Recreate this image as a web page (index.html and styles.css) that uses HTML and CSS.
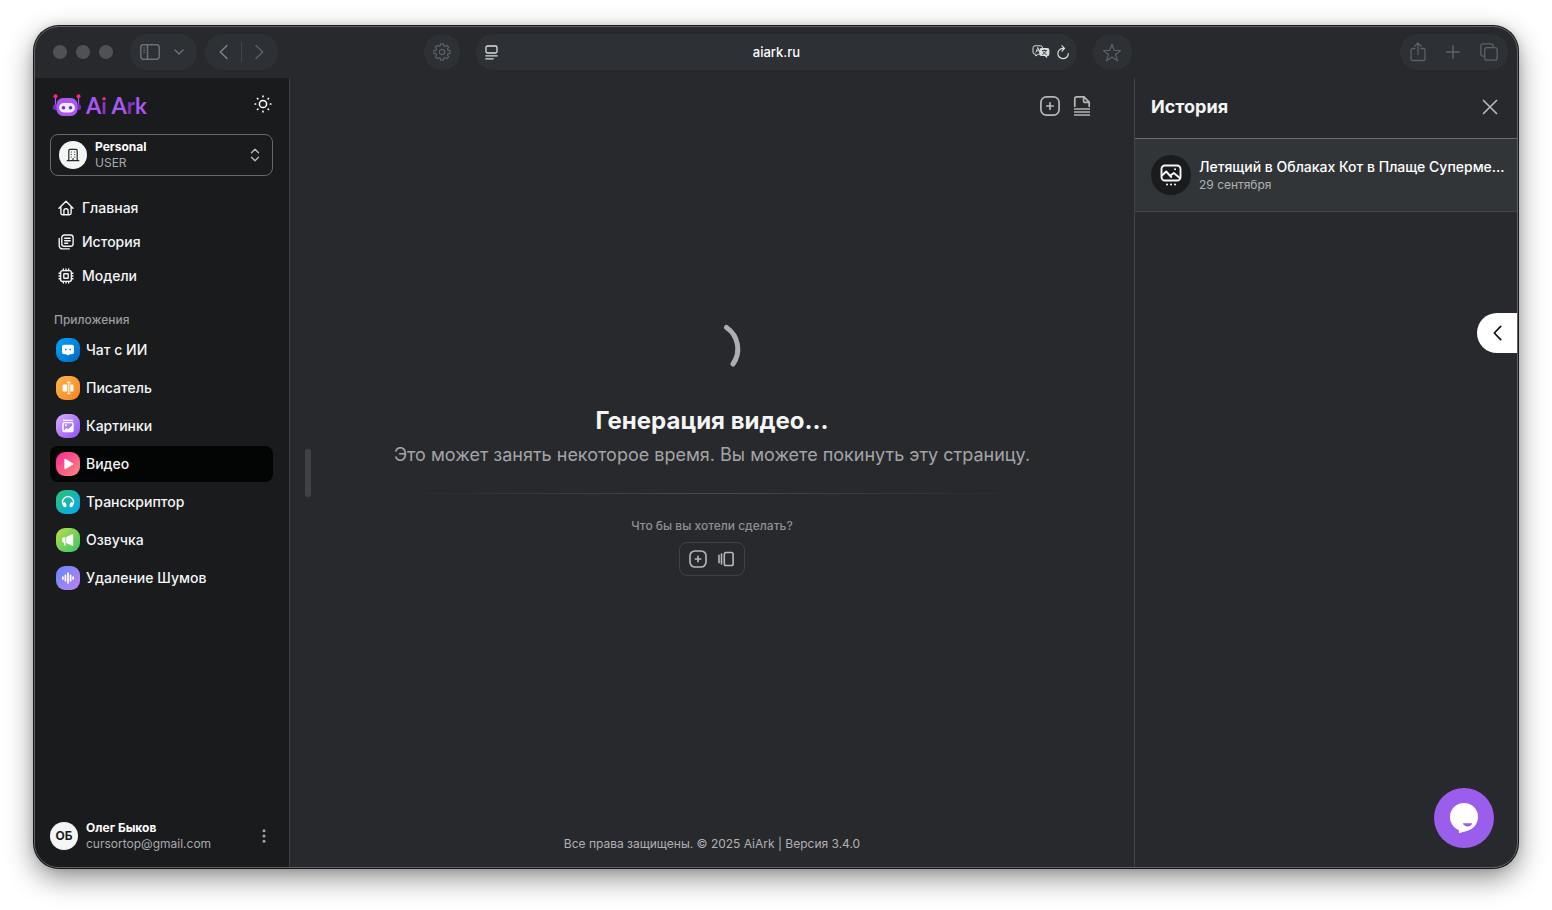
FILE: index.html
```html
<!DOCTYPE html>
<html lang="ru">
<head>
<meta charset="utf-8">
<meta name="viewport" content="width=device-width, initial-scale=1">
<title>Ai Ark</title>
<link rel="stylesheet" href="styles.css">
</head>
<body>
<div class="window">
  <header class="toolbar">
    <div class="toolbar-left">
      <div class="lights"><span class="light"></span><span class="light"></span><span class="light"></span></div>
      <div class="pill pill-side">
        <button class="tool tool-mid" aria-label="Боковая панель"><svg width="20" height="16" viewBox="0 0 20 16" fill="none" stroke="currentColor" stroke-width="1.5"><rect x=".8" y=".8" width="18.4" height="14.4" rx="2.6"/><path d="M7.500 1v14"/><path d="M3.200 4h2M3.200 6.300h2M3.200 8.600h2" stroke-width="1"/></svg></button>
        <button class="tool tool-mid" aria-label="Группы вкладок"><svg width="10" height="6" viewBox="0 0 10 6" fill="none" stroke="currentColor" stroke-width="1.5" stroke-linecap="round" stroke-linejoin="round"><path d="M1 1l4 4 4-4"/></svg></button>
      </div>
      <div class="pill pill-nav">
        <button class="tool tool-lit" aria-label="Назад"><svg width="9" height="16" viewBox="0 0 9 16" fill="none" stroke="currentColor" stroke-width="1.5" stroke-linecap="round" stroke-linejoin="round"><path d="M8 1.5L1.3 8 8 14.5"/></svg></button>
        <span class="pill-line"></span>
        <button class="tool" aria-label="Вперёд"><svg width="9" height="16" viewBox="0 0 9 16" fill="none" stroke="currentColor" stroke-width="1.5" stroke-linecap="round" stroke-linejoin="round"><path d="M1 1.5L7.700 8 1 14.5"/></svg></button>
      </div>
    </div>
    <div class="toolbar-center">
      <button class="round tool" aria-label="Настройки"><svg width="18" height="18" viewBox="0 0 18 18" fill="none" stroke="currentColor" stroke-width="1.2" stroke-linejoin="round"><circle cx="9" cy="9" r="2.700"/><path d="M7.300 2.900 7.600 .9h2.800l.3 2 1.400.6 1.700-1.200 1.900 1.900-1.200 1.700.6 1.400 2 .3v2.800l-2 .3-.6 1.400 1.200 1.700-1.900 1.900-1.700-1.200-1.400.6-.3 2H7.600l-.3-2-1.400-.6-1.700 1.200-1.900-1.900 1.200-1.700-.6-1.400-2-.3V7.600l2-.3.6-1.400-1.200-1.700 1.900-1.900 1.700 1.200z"/></svg></button>
      <div class="address">
        <button class="site" aria-label="Меню страницы"><svg width="13" height="15" viewBox="0 0 13 15" fill="none" stroke="currentColor" stroke-width="1.3" stroke-linecap="round"><rect x="1" y="1" width="11" height="7" rx="1.5"/><path d="M.8 10.800h11.400M.8 13.800h7.400"/></svg></button>
        <input class="url" type="text" value="aiark.ru" aria-label="Адрес">
        <div class="address-tools">
          <button class="site" aria-label="Перевести"><svg width="18" height="14" viewBox="0 0 18 14"><path d="M3 .8h5.500a2 2 0 0 1 2 2v4.400a2 2 0 0 1-2 2H6.300L3.700 11V9.200H3a2 2 0 0 1-2-2V2.800a2 2 0 0 1 2-2z" fill="none" stroke="currentColor"/><path d="M3.800 7.500 5.800 2.500l2 5M4.500 5.800h2.600" fill="none" stroke="currentColor" stroke-width=".9"/><path d="M9.500 3h5.700a2.200 2.200 0 0 1 2.200 2.200v3.700a2.200 2.200 0 0 1-2.200 2.200v2.200L12.600 11H9.500a2.200 2.200 0 0 1-2.200-2.200V5.200A2.200 2.200 0 0 1 9.500 3z" fill="currentColor"/><path d="M10 5.500h5M12.500 4.500v1M14 5.500c-.5 1.800-1.800 3.200-3.800 4M11 6.500c.8 1.500 2 2.500 3.800 3" fill="none" stroke="#2d3034" stroke-width=".9"/></svg></button>
          <button class="site" aria-label="Обновить"><svg width="12" height="15" viewBox="0 0 12 15" fill="none" stroke="currentColor" stroke-width="1.200" stroke-linecap="round" stroke-linejoin="round"><path d="M6.500 3.300A5.200 5.200 0 1 0 11.300 8.500M5 .8l2.500 2.600L5 6"/></svg></button>
        </div>
      </div>
      <button class="round round-wide tool" aria-label="Избранное"><svg width="20" height="19" viewBox="0 0 20 19" fill="none" stroke="currentColor" stroke-width="1.200" stroke-linejoin="round"><path d="M10 1.200l2.200 6.100 6.500.2-5.100 4 1.800 6.200L10 14.100l-5.400 3.600 1.800-6.200-5.100-4 6.500-.2z"/></svg></button>
    </div>
    <div class="pill pill-actions">
      <button class="tool" aria-label="Поделиться"><svg width="16" height="20" viewBox="0 0 16 20" fill="none" stroke="currentColor" stroke-width="1.300" stroke-linecap="round" stroke-linejoin="round"><path d="M5 6.500H3A2 2 0 0 0 1 8.500v8a2 2 0 0 0 2 2h10a2 2 0 0 0 2-2v-8a2 2 0 0 0-2-2h-2M8 12.500V1.200M4.900 4L8 1l3.100 3"/></svg></button>
      <button class="tool" aria-label="Новая вкладка"><svg width="14" height="14" viewBox="0 0 14 14" fill="none" stroke="currentColor" stroke-width="1.500" stroke-linecap="round"><path d="M7 .8v12.400M.8 7h12.400"/></svg></button>
      <button class="tool" aria-label="Все вкладки"><svg width="18" height="18" viewBox="0 0 18 18" fill="none" stroke="currentColor" stroke-width="1.300"><rect x="4.700" y="4.700" width="12.500" height="12.500" rx="2.200"/><path d="M4.700 13.200H3a2.200 2.200 0 0 1-2.200-2.200V3A2.200 2.200 0 0 1 3 .8h8A2.200 2.200 0 0 1 13.200 3v1.700"/></svg></button>
    </div>
  </header>

  <div class="app">
    <aside class="sidebar">
      <div class="brand-row">
        <a class="brand" href="#" aria-label="Ai Ark">
          <svg width="28" height="24" viewBox="0 0 28 24"><path d="M2.500 3v8M25.500 3v8" stroke="#a855f7" stroke-width="1.200"/><circle cx="2.500" cy="2.300" r="2" fill="#f72585"/><circle cx="25.500" cy="2.300" r="2" fill="#f72585"/><rect x="0" y="10.500" width="5" height="5.500" rx="2" fill="#7e2bc4"/><rect x="23" y="10.500" width="5" height="5.500" rx="2" fill="#7e2bc4"/><rect x="3.500" y="4" width="21" height="18" rx="6.500" fill="#a957f0"/><rect x="6" y="9" width="16" height="9.500" rx="4.700" fill="#efe9f8"/><circle cx="10.500" cy="13.800" r="1.800" fill="#7130b5"/><circle cx="17.500" cy="13.800" r="1.800" fill="#7130b5"/></svg>
          <span class="brand-name">A<span class="brand-i">i</span> A<span class="brand-deep">r</span>k</span>
        </a>
        <button class="icon-btn bright" aria-label="Сменить тему"><svg width="18" height="18" viewBox="0 0 18 18" fill="none" stroke="currentColor" stroke-width="1.500" stroke-linecap="round"><circle cx="9" cy="9" r="3.600"/><path d="M9 1.200v.4M9 16.400v.4M1.200 9h.4M16.400 9h.4M3.500 3.500l.3.3M14.200 14.200l.3.3M3.500 14.500l.3-.3M14.200 3.800l.3-.3" stroke-width="1.700"/></svg></button>
      </div>

      <button class="workspace">
        <span class="workspace-icon"><svg width="14" height="14" viewBox="0 0 14 14" fill="none" stroke="#26272b" stroke-width="1.200" stroke-linecap="round"><path d="M2.800 12.500V2.500a1.200 1.200 0 0 1 1.200-1.200h6a1.200 1.200 0 0 1 1.200 1.200v10M1.200 12.700h11.600M5.200 4h.1M8.700 4h.1M5.200 6.500h.1M8.700 6.500h.1M5.200 9h.1M8.700 9h.1M7 12v-1.500"/></svg></span>
        <span class="two-line"><strong>Personal</strong><span>USER</span></span>
        <svg width="10" height="14" viewBox="0 0 10 14" fill="none" stroke="#b9babd" stroke-width="1.400" stroke-linecap="round" stroke-linejoin="round"><path d="M1.500 4.700L5 1.200l3.500 3.500M1.500 9.300L5 12.800l3.500-3.500"/></svg>
      </button>

      <nav class="nav">
        <a class="nav-link" href="#"><svg width="16" height="16" viewBox="0 0 16 16" fill="none" stroke="currentColor" stroke-width="1.400" stroke-linecap="round" stroke-linejoin="round"><path d="M1 8.200L8 1.300l7 6.900M2.900 6.700V13A1.700 1.700 0 0 0 4.600 14.700h6.800A1.700 1.700 0 0 0 13.100 13V6.700M5.900 14.500v-3.700a2.100 2.100 0 0 1 4.200 0v3.700"/></svg>Главная</a>
        <a class="nav-link" href="#"><svg width="16" height="16" viewBox="0 0 16 16" fill="none" stroke="currentColor" stroke-width="1.400" stroke-linecap="round" stroke-linejoin="round"><rect x="3.800" y="1" width="11.300" height="11.300" rx="2.600"/><path d="M1.200 4.500v7A3.300 3.300 0 0 0 4.500 14.900h6.700M6.700 4.200h5.500M6.700 6.700h5.500M6.700 9.200h3"/></svg>История</a>
        <a class="nav-link" href="#"><svg width="16" height="16" viewBox="0 0 16 16" fill="none" stroke="currentColor" stroke-width="1.400" stroke-linecap="round" stroke-linejoin="round"><rect x="2.600" y="2.600" width="10.800" height="10.800" rx="2"/><rect x="5.800" y="5.800" width="4.400" height="4.400" rx=".5"/><path d="M5.300 1v1.500M8 1v1.500M10.700 1v1.500M5.300 13.500V15M8 13.500V15M10.700 13.500V15M1 5.300h1.500M1 8h1.500M1 10.700h1.500M13.500 5.300H15M13.500 8H15M13.500 10.700H15"/></svg>Модели</a>
      </nav>

      <h2 class="nav-title">Приложения</h2>
      <nav class="apps">
        <a class="app-link" href="#"><span class="tile tile-chat"><svg width="14" height="14" viewBox="0 0 14 14"><path d="M3 1.800h8a2 2 0 0 1 2 2v5.400a2 2 0 0 1-2 2H8.700L7 12.400l-1.700-1.200H3a2 2 0 0 1-2-2V3.800a2 2 0 0 1 2-2z" fill="#fff"/><path d="M4 6.500h1.500M8.500 6.500H10" stroke="#0d86dc" stroke-width="1.300"/></svg></span>Чат с ИИ</a>
        <a class="app-link" href="#"><span class="tile tile-write"><svg width="14" height="14" viewBox="0 0 14 14"><path d="M2.800 3.500h3.400v7H2.800A1.300 1.300 0 0 1 1.500 9.200V4.800a1.300 1.300 0 0 1 1.300-1.300zM9.300 3.500h1.900a1.300 1.300 0 0 1 1.300 1.300v4.400a1.300 1.300 0 0 1-1.300 1.300H9.300z" fill="#fff"/><path d="M6 1.300h3.500M7.800 1.300v11.400M6 12.700h3.500" stroke="#fff" stroke-width="1.100"/></svg></span>Писатель</a>
        <a class="app-link" href="#"><span class="tile tile-image"><svg width="14" height="14" viewBox="0 0 14 14"><path d="M2.500 1.300h9" stroke="#fff" stroke-width="1.200" stroke-linecap="round"/><rect x="2" y="3.600" width="10" height="9" rx="1.300" fill="none" stroke="#fff" stroke-width="1.400"/><path d="M2.500 12l3-3 1.500 1.200L12 6v6z" fill="#fff"/><circle cx="5" cy="6.300" r="1" fill="#fff"/></svg></span>Картинки</a>
        <a class="app-link active" href="#" aria-current="page"><span class="tile tile-video"><svg width="14" height="14" viewBox="0 0 14 14"><path d="M3.400 2.300v9.400a.6.6 0 0 0 .9.500l7.800-4.700a.6.6 0 0 0 0-1L4.300 1.800a.6.6 0 0 0-.9.500z" fill="#fff"/></svg></span>Видео</a>
        <a class="app-link" href="#"><span class="tile tile-script"><svg width="14" height="14" viewBox="0 0 14 14"><path d="M2.600 10A5.300 5.300 0 1 1 11.400 10" fill="none" stroke="#fff" stroke-width="1.400"/><rect x="2" y="7.300" width="3.200" height="5" rx="1.500" fill="#fff" transform="rotate(-15 3.600 9.800)"/><rect x="8.800" y="7.300" width="3.200" height="5" rx="1.500" fill="#fff" transform="rotate(15 10.400 9.800)"/></svg></span>Транскриптор</a>
        <a class="app-link" href="#"><span class="tile tile-voice"><svg width="14" height="14" viewBox="0 0 14 14"><path d="M5.200 4L11 1.300a.8.8 0 0 1 1.200.7v10a.8.8 0 0 1-1.200.7L5.200 10z" fill="#fff"/><path d="M4.200 4.200H3a1.800 1.800 0 0 0-1.800 1.800v2A1.800 1.800 0 0 0 3 9.800l.2 2.700h1.600z" fill="#fff"/></svg></span>Озвучка</a>
        <a class="app-link" href="#"><span class="tile tile-noise"><svg width="14" height="14" viewBox="0 0 14 14" stroke="#fff" stroke-width="1.700" stroke-linecap="round"><path d="M1.900 6v2M4.400 4.300v5.400M7 2v10M9.600 4.300v5.400M12.100 6v2"/></svg></span>Удаление Шумов</a>
      </nav>

      <div class="user">
        <span class="avatar">ОБ</span>
        <span class="two-line"><strong>Олег Быков</strong><span>cursortop@gmail.com</span></span>
        <button class="icon-btn user-menu" aria-label="Меню пользователя"><svg width="18" height="18" viewBox="0 0 18 18" fill="#a4a5a8"><circle cx="9" cy="3.800" r="1.500"/><circle cx="9" cy="9" r="1.500"/><circle cx="9" cy="14.200" r="1.500"/></svg></button>
      </div>
    </aside>

    <main class="main">
      <div class="resize-handle"></div>
      <div class="main-tools">
        <button class="icon-btn" aria-label="Создать"><svg width="20" height="20" viewBox="0 0 20 20" fill="none" stroke="currentColor" stroke-width="1.700" stroke-linecap="round"><rect x=".9" y=".9" width="18.200" height="18.200" rx="5.500"/><path d="M10 6.800v6.400M6.800 10h6.400"/></svg></button>
        <button class="icon-btn" aria-label="Шаблоны"><svg width="20" height="20" viewBox="0 0 20 20" fill="none" stroke="currentColor" stroke-width="1.700" stroke-linejoin="round"><path d="M2.800 11V2.700A1.800 1.800 0 0 1 4.600.9H12l5.200 5.200V11M11.600 1v3.700a1.700 1.700 0 0 0 1.700 1.700h3.900M2 13h16M2 16h16M2 19h16"/></svg></button>
      </div>
      <section class="status">
        <svg class="spinner" width="64" height="64" viewBox="0 0 64 64" fill="none" stroke="#adaeb0" stroke-width="5" stroke-linecap="round"><path d="M46.500 10.500A26 26 0 0 1 53 47"/></svg>
        <h1>Генерация видео...</h1>
        <p class="status-text">Это может занять некоторое время. Вы можете покинуть эту страницу.</p>
        <hr class="fade-line">
        <p class="question">Что бы вы хотели сделать?</p>
        <div class="choices">
          <button class="icon-btn" aria-label="Создать новое"><svg width="18" height="18" viewBox="0 0 20 20" fill="none" stroke="currentColor" stroke-width="1.800" stroke-linecap="round"><rect x="1.100" y="1.100" width="17.800" height="17.800" rx="5.500"/><path d="M10 7v6M7 10h6"/></svg></button>
          <button class="icon-btn" aria-label="Открыть историю"><svg width="18" height="18" viewBox="0 0 18 18" fill="none" stroke="currentColor" stroke-width="1.600" stroke-linecap="round"><rect x="7.300" y="2.500" width="8.800" height="13" rx="1.800"/><path d="M4.500 4v10M2 5.200v7.600"/></svg></button>
        </div>
      </section>
      <footer class="copyright">Все права защищены. © 2025 AiArk | Версия 3.4.0</footer>
    </main>

    <aside class="history">
      <div class="history-head">
        <h2>История</h2>
        <button class="icon-btn" aria-label="Закрыть"><svg width="16" height="16" viewBox="0 0 16 16" fill="none" stroke="currentColor" stroke-width="1.700" stroke-linecap="round"><path d="M1.500 1.500l13 13M14.500 1.500l-13 13"/></svg></button>
      </div>
      <a class="history-item" href="#">
        <span class="history-icon"><svg width="22" height="22" viewBox="0 0 22 22" fill="none" stroke="#f5f6f6" stroke-width="1.900" stroke-linecap="round" stroke-linejoin="round"><rect x="1.500" y="1.500" width="19" height="15" rx="3.500"/><path d="M2 11.500l4.200-4 5 5.500M10.500 11.500l3.300-2.500 6 5M15 5.200h.1"/><path d="M7 20.500h.1M11 20.500h.1M15 20.500h.1"/></svg></span>
        <span class="history-text"><span class="history-title">Летящий в Облаках Кот в Плаще Суперме...</span><span class="history-date">29 сентября</span></span>
      </a>
      <button class="drawer-tab" aria-label="Открыть панель"><svg width="9" height="16" viewBox="0 0 9 16" fill="none" stroke="#111" stroke-width="1.700" stroke-linecap="round" stroke-linejoin="round"><path d="M7.700 1.300L1.300 8l6.400 6.700"/></svg></button>
      <button class="chat" aria-label="Открыть чат"><svg width="30" height="32" viewBox="0 0 30 32"><circle cx="15" cy="15" r="14" fill="#fff"/><path d="M9.500 26l.6 5.200c4-1.400 8.500-1.800 12.400-4.700z" fill="#fff"/><path d="M13.800 21.200h9.500c-.6 2-2.500 3.200-4.700 3.200s-4.200-1.200-4.800-3.200z" fill="#9b5deb"/></svg></button>
    </aside>
  </div>
</div>
</body>
</html>
```

FILE: styles.css
```css
* { box-sizing: border-box; }
body {
  margin: 0;
  background: #fff;
  color: #f4f5f5;
  font-family: Inter, "Liberation Sans", sans-serif;
  font-size: 14px;
  line-height: 20px;
}
h1, h2, p { margin: 0; }
a { color: inherit; text-decoration: none; }
button, input {
  margin: 0;
  padding: 0;
  border: 0;
  background: none;
  color: inherit;
  font: inherit;
}
svg { display: block; flex: none; }

.window {
  display: flex;
  flex-direction: column;
  min-height: calc(100vh - 68px);
  margin: 26px 34px 42px;
  border: 1px solid #626366;
  border-radius: 25px;
  background: #28292d;
  overflow: hidden;
  box-shadow: 0 0 0 1px #17181a, 0 10px 28px rgba(0, 0, 0, .45), 0 0 10px rgba(0, 0, 0, .15);
}

/* Browser toolbar */
.toolbar {
  display: grid;
  grid-template-columns: 1fr minmax(0, 708px) 1fr;
  align-items: center;
  height: 51px;
  padding: 0 9px 1px 12px;
}
.toolbar-left { display: flex; align-items: center; gap: 8px; padding-left: 6px; }
.lights { display: flex; gap: 9px; padding-right: 9px; }
.light { width: 14px; height: 14px; border-radius: 50%; background: #505155; }
.pill { display: flex; align-items: center; height: 36px; border-radius: 18px; background: #2d3135; }
.pill-side { gap: 14px; padding: 0 13px 0 10px; }
.pill-nav { gap: 13px; padding: 0 14px; }
.pill-line { width: 1px; height: 20px; background: #43464a; }
.pill-actions { justify-self: end; gap: 20px; padding: 0 10px; }
.tool { display: grid; place-items: center; color: #5d6064; }
.tool-mid { color: #6c6f73; }
.tool-lit { color: #808386; }
.toolbar-center { display: flex; gap: 16px; }
.round { flex: none; width: 36px; height: 36px; border-radius: 18px; background: #2d3135; }
.round-wide { width: 39px; }
.address {
  display: grid;
  grid-template-columns: 1fr auto 1fr;
  align-items: center;
  flex: 1;
  min-width: 0;
  height: 36px;
  padding: 0 8px 0 9px;
  border-radius: 18px;
  background: #2d3135;
}
.site { justify-self: start; color: #dcdddd; }
.url { width: 120px; color: #fff; font-size: 13px; font-weight: 500; text-align: center; }
.address-tools { display: flex; align-items: center; justify-self: end; gap: 7px; }

/* Page shell */
.app { display: flex; flex: 1; }
.icon-btn { display: grid; place-items: center; color: #b6b7b9; }
.bright { color: #fff; }

/* Sidebar */
.sidebar {
  display: flex;
  flex-direction: column;
  flex: none;
  width: 255px;
  padding: 14px 16px 15px 15px;
  border-right: 1px solid #3d3f42;
  background: #1a1b1d;
}
.brand-row { display: flex; align-items: center; justify-content: space-between; height: 24px; padding: 0 1px 0 3px; }
.brand { display: flex; align-items: center; gap: 5px; padding-top: 4px; }
.brand-name { color: #a957f0; font-family: Lato, sans-serif; font-size: 22px; font-weight: 700; line-height: 24px; }
.brand-i { background: linear-gradient(#f72585 9px, #8a2fd0 9px); background-clip: text; -webkit-background-clip: text; color: transparent; }
.brand-deep { color: #8230bd; }
.workspace {
  display: flex;
  align-items: center;
  gap: 8px;
  height: 42px;
  margin-top: 18px;
  padding: 0 12px 0 8px;
  border: 1px solid #66686a;
  border-radius: 8px;
  text-align: left;
}
.workspace-icon, .avatar {
  display: grid;
  place-items: center;
  flex: none;
  width: 28px;
  height: 28px;
  border-radius: 50%;
  background: #f4f5f5;
}
.two-line { display: flex; flex: 1; flex-direction: column; color: #a9aaad; font-size: 12px; line-height: 16px; }
.two-line strong { color: #fff; font-weight: 700; }
.nav { display: flex; flex-direction: column; gap: 2px; margin-top: 16px; }
.nav-link { display: flex; align-items: center; gap: 8px; height: 32px; padding: 0 8px; font-weight: 500; }
.nav-title { margin-top: 20px; padding-left: 4px; color: #9b9c9f; font-size: 12px; font-weight: 500; line-height: 16px; }
.apps { display: flex; flex-direction: column; gap: 2px; margin-top: 4px; }
.app-link { display: flex; align-items: center; gap: 6px; height: 36px; padding: 0 6px; border-radius: 8px; font-weight: 500; }
.active { background: #030404; }
.tile { display: grid; place-items: center; width: 24px; height: 24px; border-radius: 9px; }
.tile-chat { background: linear-gradient(135deg, #05a4fb, #0068c0); }
.tile-write { background: linear-gradient(135deg, #ffb84d, #f7821b); }
.tile-image { background: linear-gradient(135deg, #dcaefc, #8b50f2); }
.tile-video { background: linear-gradient(135deg, #fb2695, #fa8b7c); }
.tile-script { background: linear-gradient(135deg, #2bc46e, #05a5fb); }
.tile-voice { background: linear-gradient(135deg, #b8e04a, #38c565); }
.tile-noise { background: linear-gradient(135deg, #6488fb, #be82f0); }
.user { display: flex; align-items: center; gap: 8px; margin-top: auto; }
.avatar { color: #1a1b1d; font-size: 12px; font-weight: 700; }

/* Main area */
.main { position: relative; display: flex; flex: 1; flex-direction: column; min-width: 0; }
.resize-handle { position: absolute; left: 15px; top: calc(50% - 24px); width: 6px; height: 48px; border-radius: 3px; background: #3f4246; }
.main-tools { display: flex; justify-content: flex-end; gap: 12px; padding: 18px 42px 0 0; }
.status {
  display: flex;
  flex: 1;
  flex-direction: column;
  align-items: center;
  justify-content: center;
  padding: 0 16px 60px;
  text-align: center;
}
.status h1 { margin-top: 24px; font-size: 24px; font-weight: 700; line-height: 32px; }
.status-text { margin-top: 4px; color: #a3a4a7; font-size: 18px; line-height: 28px; }
.fade-line {
  width: 624px;
  max-width: 100%;
  height: 1px;
  margin: 24px 0;
  border: 0;
  background: linear-gradient(90deg, transparent, #47494c, transparent);
}
.question { color: #8f9093; font-size: 12px; font-weight: 500; line-height: 16px; }
.choices { display: flex; gap: 10px; margin-top: 8px; padding: 7px 9px; border: 1px solid #3f4145; border-radius: 8px; }
.copyright { padding-bottom: 15px; color: #b0b1b3; font-size: 12px; line-height: 16px; text-align: center; }

/* History panel */
.history { position: relative; flex: none; width: 383px; border-left: 1px solid #414346; }
.history-head {
  display: flex;
  align-items: center;
  justify-content: space-between;
  height: 61px;
  padding: 0 19px 2px 16px;
  border-bottom: 1px solid #6a6c6e;
}
.history-head h2 { font-size: 18px; font-weight: 700; line-height: 28px; }
.history-item {
  display: flex;
  align-items: center;
  gap: 8px;
  height: 73px;
  padding: 0 8px 0 16px;
  border-bottom: 1px solid #414548;
  background: #313538;
}
.history-icon { display: grid; place-items: center; flex: none; width: 40px; height: 40px; border-radius: 50%; background: #1a1b1d; }
.history-text { display: flex; flex: 1; flex-direction: column; min-width: 0; }
.history-title { overflow: hidden; color: #fff; font-weight: 500; line-height: 20px; text-overflow: ellipsis; white-space: nowrap; }
.history-date { color: #b0b1b3; font-size: 12px; line-height: 16px; }
.drawer-tab {
  position: absolute;
  top: 235px;
  right: 0;
  display: grid;
  place-items: center;
  width: 40px;
  height: 40px;
  border-radius: 20px 0 0 20px;
  background: #fff;
}
.chat {
  position: absolute;
  right: 23px;
  bottom: 19px;
  display: grid;
  place-items: center;
  width: 60px;
  height: 60px;
  border-radius: 50%;
  background: #9b5deb;
}
```
